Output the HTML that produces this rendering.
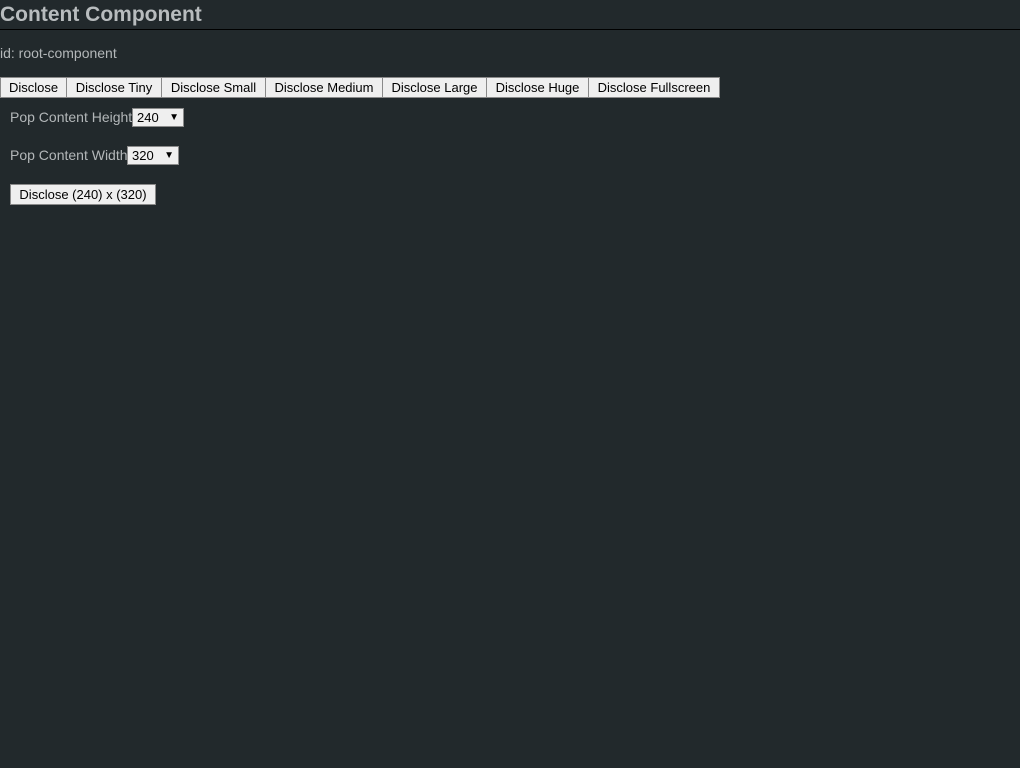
<!DOCTYPE html>
<html><head><style>
body{margin:0;background:#22292c;width:1020px;height:768px;overflow:hidden;font-family:"Liberation Sans",sans-serif;color:#b3b7b9;position:relative}
.a{position:absolute;white-space:nowrap}
h1{position:absolute;left:0;top:3px;margin:0;font-size:21px;font-weight:bold;color:#b8bcbe}
.hr{position:absolute;left:0;top:29px;width:1020px;height:1px;background:#000}
.b{position:absolute;top:77px;height:21px;box-sizing:border-box;background:#efefef;border:1px solid #8a8a8a;color:#000;font-size:13px;line-height:19px;text-align:center}
.s{position:absolute;height:19px;box-sizing:border-box;background:#efefef;border:1px solid #8a8a8a;color:#000;font-size:13px;line-height:17px;padding-left:4px}
.s i{position:absolute;right:4px;top:0;font-style:normal;font-size:10px}
</style></head><body>
<h1>Content Component</h1>
<div class="hr"></div>
<div class="a" style="left:0;top:45px;font-size:14px">id: root-component</div>
<div class="b" style="left:0;width:67px">Disclose</div>
<div class="b" style="left:66px;width:96px">Disclose Tiny</div>
<div class="b" style="left:161px;width:105px">Disclose Small</div>
<div class="b" style="left:265px;width:118px">Disclose Medium</div>
<div class="b" style="left:382px;width:105px">Disclose Large</div>
<div class="b" style="left:486px;width:103px">Disclose Huge</div>
<div class="b" style="left:588px;width:132px">Disclose Fullscreen</div>
<div class="a" style="left:10px;top:109px;font-size:14px">Pop Content Height</div>
<div class="s" style="left:132px;top:108px;width:52px">240<i>▼</i></div>
<div class="a" style="left:10px;top:147px;font-size:14px">Pop Content Width</div>
<div class="s" style="left:127px;top:146px;width:52px">320<i>▼</i></div>
<div class="b" style="left:10px;top:184px;width:146px">Disclose (240) x (320)</div>
</body></html>
